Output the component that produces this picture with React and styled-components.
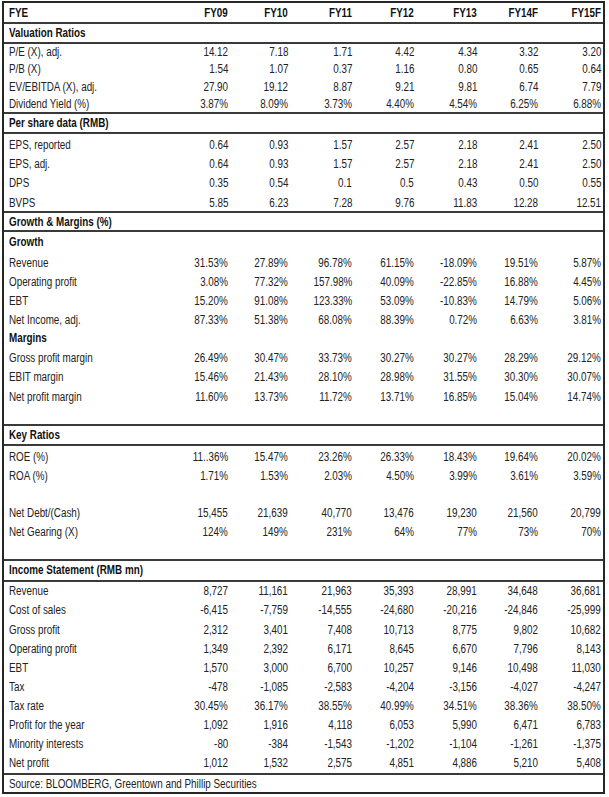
import React from "react";
import styled, { createGlobalStyle } from "styled-components";

const GlobalStyle = createGlobalStyle`
  body {
    margin: 0;
    background: #fff;
  }
`;

const YEARS = ["FY09", "FY10", "FY11", "FY12", "FY13", "FY14F", "FY15F"];

// rows in the order they are printed
// h = row height, rule = line under the row, drop = how far the text sits below centre
const ROWS = [
    { kind: "head", label: "FYE", h: 19.3, rule: true },
    { kind: "title", label: "Valuation Ratios", h: 17.4, rule: true },
    { label: "P/E (X), adj.", vals: ["14.12", "7.18", "1.71", "4.42", "4.34", "3.32", "3.20"], h: 17.15, drop: 0 },
    { label: "P/B (X)", vals: ["1.54", "1.07", "0.37", "1.16", "0.80", "0.65", "0.64"], h: 17.15, drop: 0 },
    { label: "EV/EBITDA (X), adj.", vals: ["27.90", "19.12", "8.87", "9.21", "9.81", "6.74", "7.79"], h: 17.15, drop: 0 },
    { label: "Dividend Yield (%)", vals: ["3.87%", "8.09%", "3.73%", "4.40%", "4.54%", "6.25%", "6.88%"], h: 17.15, drop: 0, rule: true },
    { kind: "title", label: "Per share data (RMB)", h: 17.4, rule: true },
    { label: "EPS, reported", vals: ["0.64", "0.93", "1.57", "2.57", "2.18", "2.41", "2.50"], h: 19.25 },
    { label: "EPS, adj.", vals: ["0.64", "0.93", "1.57", "2.57", "2.18", "2.41", "2.50"], h: 19.25 },
    { label: "DPS", vals: ["0.35", "0.54", "0.1", "0.5", "0.43", "0.50", "0.55"], h: 19.25 },
    { label: "BVPS", vals: ["5.85", "6.23", "7.28", "9.76", "11.83", "12.28", "12.51"], h: 19.25, rule: true },
    { kind: "title", label: "Growth & Margins (%)", h: 17.8, rule: true },
    { kind: "title", label: "Growth", h: 19.15 },
    { label: "Revenue", vals: ["31.53%", "27.89%", "96.78%", "61.15%", "-18.09%", "19.51%", "5.87%"], h: 19.15 },
    { label: "Operating profit", vals: ["3.08%", "77.32%", "157.98%", "40.09%", "-22.85%", "16.88%", "4.45%"], h: 19.15 },
    { label: "EBT", vals: ["15.20%", "91.08%", "123.33%", "53.09%", "-10.83%", "14.79%", "5.06%"], h: 19.15 },
    { label: "Net Income, adj.", vals: ["87.33%", "51.38%", "68.08%", "88.39%", "0.72%", "6.63%", "3.81%"], h: 19.15 },
    { kind: "title", label: "Margins", h: 19.15 },
    { label: "Gross profit margin", vals: ["26.49%", "30.47%", "33.73%", "30.27%", "30.27%", "28.29%", "29.12%"], h: 19.15 },
    { label: "EBIT margin", vals: ["15.46%", "21.43%", "28.10%", "28.98%", "31.55%", "30.30%", "30.07%"], h: 19.15 },
    { label: "Net profit margin", vals: ["11.60%", "13.73%", "11.72%", "13.71%", "16.85%", "15.04%", "14.74%"], h: 19.15 },
    { kind: "blank", h: 19.15, rule: true },
    { kind: "title", label: "Key Ratios", h: 18, rule: true },
    { label: "ROE (%)", vals: ["11..36%", "15.47%", "23.26%", "26.33%", "18.43%", "19.64%", "20.02%"], h: 18.83 },
    { label: "ROA (%)", vals: ["1.71%", "1.53%", "2.03%", "4.50%", "3.99%", "3.61%", "3.59%"], h: 18.83 },
    { kind: "blank", h: 18.83 },
    { label: "Net Debt/(Cash)", vals: ["15,455", "21,639", "40,770", "13,476", "19,230", "21,560", "20,799"], h: 18.83 },
    { label: "Net Gearing (X)", vals: ["124%", "149%", "231%", "64%", "77%", "73%", "70%"], h: 18.83 },
    { kind: "blank", h: 18.83, rule: true },
    { kind: "title", label: "Income Statement (RMB mn)", h: 19, rule: true },
    { label: "Revenue", vals: ["8,727", "11,161", "21,963", "35,393", "28,991", "34,648", "36,681"], h: 19.1, drop: 0 },
    { label: "Cost of sales", vals: ["-6,415", "-7,759", "-14,555", "-24,680", "-20,216", "-24,846", "-25,999"], h: 19.1, drop: 0 },
    { label: "Gross profit", vals: ["2,312", "3,401", "7,408", "10,713", "8,775", "9,802", "10,682"], h: 19.1, drop: 0 },
    { label: "Operating profit", vals: ["1,349", "2,392", "6,171", "8,645", "6,670", "7,796", "8,143"], h: 19.1, drop: 0 },
    { label: "EBT", vals: ["1,570", "3,000", "6,700", "10,257", "9,146", "10,498", "11,030"], h: 19.1, drop: 0 },
    { label: "Tax", vals: ["-478", "-1,085", "-2,583", "-4,204", "-3,156", "-4,027", "-4,247"], h: 19.1, drop: 0 },
    { label: "Tax rate", vals: ["30.45%", "36.17%", "38.55%", "40.99%", "34.51%", "38.36%", "38.50%"], h: 19.1, drop: 0 },
    { label: "Profit for the year", vals: ["1,092", "1,916", "4,118", "6,053", "5,990", "6,471", "6,783"], h: 19.1, drop: 0 },
    { label: "Minority interests", vals: ["-80", "-384", "-1,543", "-1,202", "-1,104", "-1,261", "-1,375"], h: 19.1, drop: 0 },
    { label: "Net profit", vals: ["1,012", "1,532", "2,575", "4,851", "4,886", "5,210", "5,408"], h: 19.1, drop: 0, rule: true },
    { kind: "source", label: "Source: BLOOMBERG, Greentown and Phillip Securities", h: 17.3, drop: 2 },
];

const RULE = 2;

const Frame = styled.div`
    margin: 1px 0 0 2px;
    width: 599px;
    border: 2px solid #262626;
    font-family: "Liberation Sans", Arial, sans-serif;
    font-size: 12px;
    color: #222;
`;

const Row = styled.div`
    display: grid;
    grid-template-columns: 166px 60px 60px 64px 62px 63px 61px 63px;
    align-items: center;
    box-sizing: border-box;
    height: ${(p) => p.$h + (p.$rule ? RULE : 0)}px;
    padding-top: ${(p) => p.$drop || 0}px;
    border-bottom: ${(p) => (p.$rule ? `${RULE}px solid #3a3a3a` : "none")};
`;

const Label = styled.div`
    padding-left: 5px;
    white-space: nowrap;
    font-weight: ${(p) => (p.$bold ? 700 : 400)};
    color: ${(p) => (p.$bold ? "#111" : "#222")};
    grid-column: ${(p) => (p.$wide ? "1 / -1" : "auto")};
`;

const Num = styled.div`
    text-align: right;
    padding-right: 2px;
    white-space: nowrap;
    font-weight: ${(p) => (p.$bold ? 700 : 400)};
    color: ${(p) => (p.$bold ? "#111" : "#222")};
`;

// the print uses a narrow face; squeeze Liberation Sans to the same width
const Narrow = styled.span`
    display: inline-block;
    transform: scaleX(0.82);
    transform-origin: ${(p) => (p.$right ? "right" : "left")} center;
`;

function TableRow({ row }) {
    if (row.kind === "head") {
        return (
            <Row $h={row.h} $rule={row.rule}>
                <Label $bold>
                    <Narrow>{row.label}</Narrow>
                </Label>
                {YEARS.map((y) => (
                    <Num key={y} $bold>
                        <Narrow $right>{y}</Narrow>
                    </Num>
                ))}
            </Row>
        );
    }
    if (row.kind === "title" || row.kind === "source") {
        return (
            <Row $h={row.h} $rule={row.rule} $drop={row.drop}>
                <Label $wide $bold={row.kind === "title"}>
                    <Narrow>{row.label}</Narrow>
                </Label>
            </Row>
        );
    }
    if (row.kind === "blank") {
        return <Row $h={row.h} $rule={row.rule} />;
    }
    return (
        <Row $h={row.h} $rule={row.rule} $drop={row.drop ?? 3}>
            <Label>
                <Narrow>{row.label}</Narrow>
            </Label>
            {row.vals.map((v, i) => (
                <Num key={i}>
                    <Narrow $right>{v}</Narrow>
                </Num>
            ))}
        </Row>
    );
}

export default function App() {
    return (
        <>
            <GlobalStyle />
            <Frame>
                {ROWS.map((row, i) => (
                    <TableRow key={i} row={row} />
                ))}
            </Frame>
        </>
    );
}
